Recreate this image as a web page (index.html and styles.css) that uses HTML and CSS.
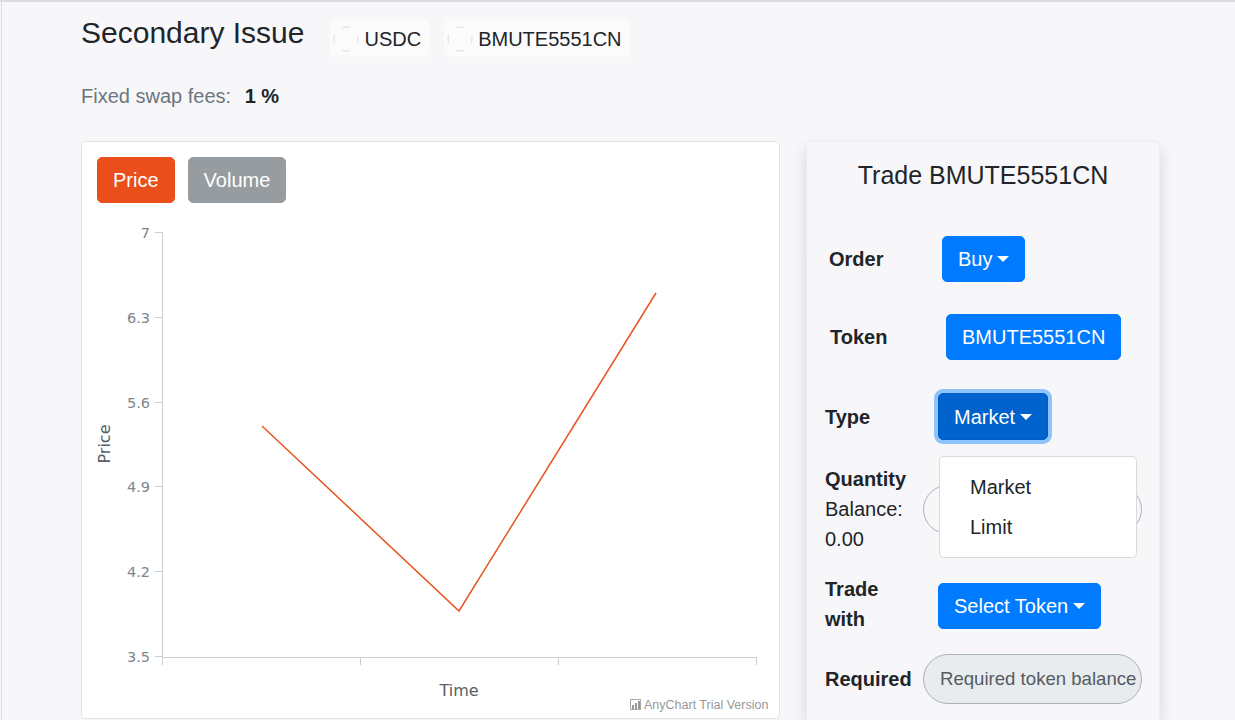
FILE: index.html
```html
<!DOCTYPE html>
<html lang="en">
<head>
  <meta charset="UTF-8">
  <meta name="viewport" content="width=device-width, initial-scale=1.0">
  <title>Secondary Issue</title>
  <link rel="stylesheet" href="styles.css">
</head>
<body>
  <div class="page">
    <div class="content">
      <div class="title-row">
        <h4 class="title">Secondary Issue</h4>
        <div class="chip">
          <svg class="chip-img" width="26" height="26" viewBox="0 0 26 26"><circle cx="13" cy="13" r="12" fill="none" stroke="#dedfe2" stroke-width="1" stroke-dasharray="8 10.85" stroke-dashoffset="4"/></svg>
          <span>USDC</span>
        </div>
        <div class="chip">
          <svg class="chip-img" width="26" height="26" viewBox="0 0 26 26"><circle cx="13" cy="13" r="12" fill="none" stroke="#dedfe2" stroke-width="1" stroke-dasharray="8 10.85" stroke-dashoffset="4"/></svg>
          <span>BMUTE5551CN</span>
        </div>
      </div>

      <p class="fees">Fixed swap fees: <strong>1 %</strong></p>

      <div class="cards">
        <div class="chart-card">
          <div class="chart-tabs">
            <button class="btn btn-price">Price</button>
            <button class="btn btn-volume">Volume</button>
          </div>
          <svg class="chart" width="697" height="514" viewBox="82 203 697 514">
            <g stroke="#cecece" stroke-width="1" fill="none">
              <line x1="162.5" y1="232" x2="162.5" y2="657"/>
              <line x1="155" y1="232.5" x2="162" y2="232.5"/>
              <line x1="155" y1="317.5" x2="162" y2="317.5"/>
              <line x1="155" y1="402.5" x2="162" y2="402.5"/>
              <line x1="155" y1="486.5" x2="162" y2="486.5"/>
              <line x1="155" y1="571.5" x2="162" y2="571.5"/>
              <line x1="155" y1="656.5" x2="162" y2="656.5"/>
              <line x1="162" y1="657.5" x2="757" y2="657.5"/>
              <line x1="162.5" y1="657" x2="162.5" y2="665"/>
              <line x1="360.5" y1="657" x2="360.5" y2="665"/>
              <line x1="558.5" y1="657" x2="558.5" y2="665"/>
              <line x1="756.5" y1="657" x2="756.5" y2="665"/>
            </g>
            <g class="axis-labels" text-anchor="end">
              <text x="150" y="238">7</text>
              <text x="150" y="323">6.3</text>
              <text x="150" y="408">5.6</text>
              <text x="150" y="492">4.9</text>
              <text x="150" y="577">4.2</text>
              <text x="150" y="662">3.5</text>
            </g>
            <text class="axis-title" x="459" y="696" text-anchor="middle">Time</text>
            <text class="axis-title" transform="translate(110 444) rotate(-90)" text-anchor="middle">Price</text>
            <polyline points="262,426 459,611 656,293" fill="none" stroke="#e8531e" stroke-width="1.5"/>
            <g class="credits">
              <rect x="630.5" y="699.5" width="10" height="10" fill="none" stroke="#aaa"/>
              <rect x="632" y="705" width="2" height="4" fill="#999"/>
              <rect x="635" y="703" width="2" height="6" fill="#999"/>
              <rect x="638" y="701" width="2" height="8" fill="#999"/>
              <text x="644" y="709">AnyChart Trial Version</text>
            </g>
          </svg>
        </div>

        <div class="trade-card">
          <div class="trade-header">Trade BMUTE5551CN</div>
          <div class="trade-body">
            <div class="form-row">
              <div class="form-label shift-4">Order</div>
              <div class="form-value">
                <button class="btn btn-primary shift-4">Buy<span class="caret"></span></button>
              </div>
            </div>

            <div class="form-row">
              <div class="form-label shift-5">Token</div>
              <div class="form-value">
                <button class="btn btn-primary shift-8">BMUTE5551CN</button>
              </div>
            </div>

            <div class="form-row row-type">
              <div class="form-label">Type</div>
              <div class="form-value">
                <div class="dropdown">
                  <button class="btn btn-primary btn-focus">Market<span class="caret"></span></button>
                  <div class="dropdown-menu">
                    <div class="dropdown-item">Market</div>
                    <div class="dropdown-item">Limit</div>
                  </div>
                </div>
              </div>
            </div>

            <div class="form-row">
              <div class="form-label plain">
                <strong>Quantity</strong><br>
                Balance:<br>
                0.00
              </div>
              <div class="form-value flush">
                <div class="pill-input"></div>
              </div>
            </div>

            <div class="form-row">
              <div class="form-label">Trade<br>with</div>
              <div class="form-value">
                <button class="btn btn-primary nudge-down">Select Token<span class="caret"></span></button>
              </div>
            </div>

            <div class="form-row row-required">
              <div class="form-label">Required</div>
              <div class="form-value flush">
                <div class="pill-input readonly">Required token balance</div>
              </div>
            </div>
          </div>
        </div>
      </div>
    </div>
  </div>
</body>
</html>
```

FILE: styles.css
```css
/* Base */
* {
  box-sizing: border-box;
}

body {
  margin: 0;
  font-family: "Liberation Sans", Arial, sans-serif;
  font-size: 20px;
  line-height: 1.5;
  color: #212529;
  background-color: #f7f7f9;
  border-top: 2px solid #dcdde0;
}

.page {
  margin-left: 1px;
  border-left: 1px solid #dcdde0;
  height: 718px;
}

.content {
  padding: 13px 0 0 79px;
}

/* Title row */
.title-row {
  display: flex;
  align-items: flex-start;
}

.title {
  margin: 0 26px 0 0;
  font-size: 30px;
  font-weight: 400;
  line-height: 36px;
  color: #212529;
}

.chip {
  display: flex;
  align-items: center;
  height: 37px;
  margin-top: 5px;
  margin-right: 15px;
  padding: 0 8px 0 3px;
  background-color: #fbfbfc;
  border-radius: 5px;
}

.chip-img {
  margin-right: 5px;
}

.fees {
  margin: 24px 0 30px;
  color: #6c757d;
}

.fees strong {
  margin-left: 8px;
  color: #212529;
}

/* Cards */
.cards {
  display: flex;
  gap: 26px;
}

.chart-card {
  width: 699px;
  height: 578px;
  background-color: #fff;
  border: 1px solid #e2e3e5;
  border-radius: 5px;
}

.chart-tabs {
  display: flex;
  gap: 13px;
  padding: 15px 15px 0;
}

.chart {
  display: block;
}

.axis-labels text {
  font-family: "DejaVu Sans", Verdana, sans-serif;
  font-size: 14.5px;
  fill: #7c868e;
}

.axis-title {
  font-family: "DejaVu Sans", Verdana, sans-serif;
  font-size: 16px;
  fill: #545f69;
}

.credits text {
  font-family: "Liberation Sans", Arial, sans-serif;
  font-size: 12.5px;
  fill: #999;
}

/* Buttons */
.btn {
  display: inline-flex;
  align-items: center;
  height: 46px;
  padding: 7px 15px;
  font-family: inherit;
  font-size: 20px;
  line-height: 30px;
  color: #fff;
  border: 1px solid transparent;
  border-radius: 5px;
  cursor: pointer;
}

.btn-price {
  background-color: #e94e1b;
  border-color: #e94e1b;
}

.btn-volume {
  background-color: #969c9f;
  border-color: #969c9f;
}

.btn-primary {
  background-color: #007bff;
  border-color: #007bff;
}

.btn-focus {
  height: 47px;
  background-color: #0062cc;
  border-color: #005cbf;
  box-shadow: 0 0 0 4px rgba(38, 143, 255, 0.5);
}

.caret {
  display: inline-block;
  margin-left: 5px;
  border-top: 6px solid #fff;
  border-left: 6px solid transparent;
  border-right: 6px solid transparent;
}

/* Trade card */
.trade-card {
  width: 354px;
  height: 579px;
  background-color: #f7f7f9;
  border: 1px solid rgba(0, 0, 0, 0.04);
  border-bottom: none;
  border-radius: 5px 5px 0 0;
  box-shadow: 0 8px 16px rgba(0, 0, 0, 0.13);
}

.trade-header {
  padding: 18px 0 22px;
  font-size: 25px;
  line-height: 30px;
  text-align: center;
  color: #212529;
  border-bottom: 1px solid rgba(0, 0, 0, 0.015);
}

.trade-body {
  display: flex;
  flex-direction: column;
  gap: 20px;
  padding-top: 17px;
}

.form-row {
  display: flex;
  align-items: center;
  min-height: 58px;
}

.row-type {
  padding-top: 3px;
}

.row-required {
  min-height: 50px;
}

.form-label {
  width: 116px;
  padding-left: 18px;
  font-weight: 700;
  flex-shrink: 0;
}

.form-label.plain {
  font-weight: 400;
}

.form-value {
  padding-left: 15px;
}

.form-value.flush {
  padding-left: 0;
}

.shift-4 {
  margin-left: 4px;
}

.form-label.shift-4 {
  margin-left: 0;
  padding-left: 22px;
}

.form-label.shift-5 {
  padding-left: 23px;
}

.shift-8 {
  margin-left: 8px;
}

.nudge-down {
  margin-top: 4px;
}

/* Dropdown */
.dropdown {
  position: relative;
}

.dropdown-menu {
  position: absolute;
  top: 100%;
  left: 1px;
  z-index: 5;
  width: 198px;
  margin-top: 16px;
  padding: 10px 0;
  background-color: #fff;
  border: 1px solid rgba(0, 0, 0, 0.15);
  border-radius: 5px;
}

.dropdown-item {
  padding: 5px 30px;
  line-height: 30px;
  color: #212529;
}

/* Inputs */
.pill-input {
  width: 219px;
  height: 49px;
  border: 1px solid #aab2ba;
  border-radius: 25px;
}

.pill-input.readonly {
  height: 50px;
  padding-left: 16px;
  font-size: 18.6px;
  line-height: 48px;
  color: #555b61;
  white-space: nowrap;
  overflow: hidden;
  background-color: #e9ecef;
}
```
